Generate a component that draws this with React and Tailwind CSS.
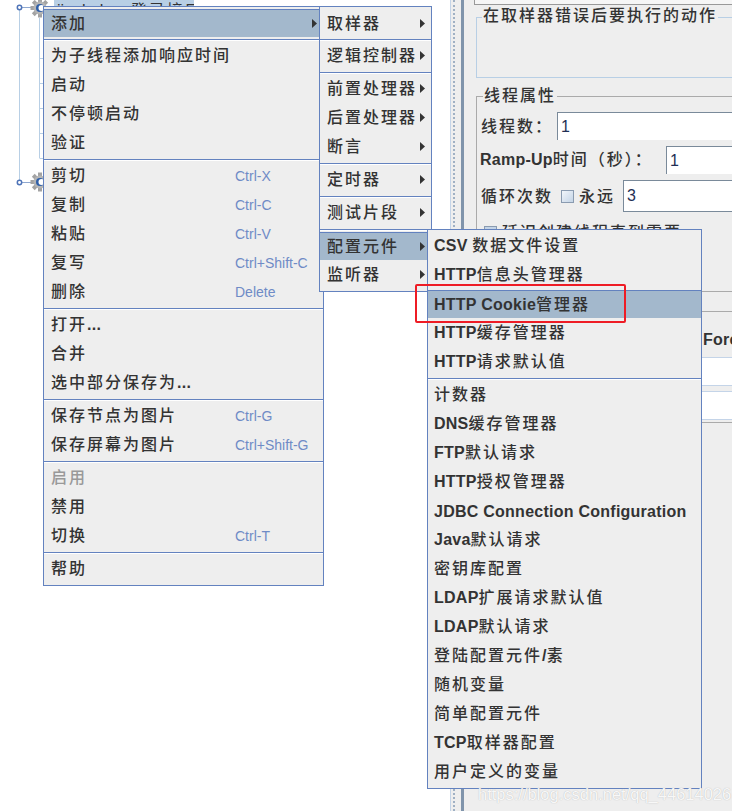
const LINE = 'bg-[#6382bf]';

const mainMenu = [
  { label: '添加', arrow: true, active: true },
  'sep',
  { label: '为子线程添加响应时间' },
  { label: '启动' },
  { label: '不停顿启动' },
  { label: '验证' },
  'sep',
  { label: '剪切', key: 'Ctrl-X' },
  { label: '复制', key: 'Ctrl-C' },
  { label: '粘贴', key: 'Ctrl-V' },
  { label: '复写', key: 'Ctrl+Shift-C' },
  { label: '删除', key: 'Delete' },
  'sep',
  { label: '打开...' },
  { label: '合并' },
  { label: '选中部分保存为...' },
  'sep',
  { label: '保存节点为图片', key: 'Ctrl-G' },
  { label: '保存屏幕为图片', key: 'Ctrl+Shift-G' },
  'sep',
  { label: '启用', disabled: true },
  { label: '禁用' },
  { label: '切换', key: 'Ctrl-T' },
  'sep',
  { label: '帮助' },
];

const addMenu = [
  { label: '取样器', arrow: true },
  'sep',
  { label: '逻辑控制器', arrow: true },
  'sep',
  { label: '前置处理器', arrow: true },
  { label: '后置处理器', arrow: true },
  { label: '断言', arrow: true },
  'sep',
  { label: '定时器', arrow: true },
  'sep',
  { label: '测试片段', arrow: true },
  'sep',
  { label: '配置元件', arrow: true, active: true },
  { label: '监听器', arrow: true },
];

const configMenu = [
  { label: 'CSV 数据文件设置' },
  { label: 'HTTP信息头管理器' },
  { label: 'HTTP Cookie管理器', active: true },
  { label: 'HTTP缓存管理器' },
  { label: 'HTTP请求默认值' },
  'sep',
  { label: '计数器' },
  { label: 'DNS缓存管理器' },
  { label: 'FTP默认请求' },
  { label: 'HTTP授权管理器' },
  { label: 'JDBC Connection Configuration' },
  { label: 'Java默认请求' },
  { label: '密钥库配置' },
  { label: 'LDAP扩展请求默认值' },
  { label: 'LDAP默认请求' },
  { label: '登陆配置元件/素' },
  { label: '随机变量' },
  { label: '简单配置元件' },
  { label: 'TCP取样器配置' },
  { label: '用户定义的变量' },
];

// latin runs are bold arial, cjk runs are spaced out like the old bitmap font
function Label({ text }) {
  const parts = text.split(/([\u0000-\u007f]+)/).filter(Boolean);
  const latinOnly = parts.length === 1 && /^[\u0000-\u007f]+$/.test(parts[0]);
  return (
    <span className={`inline-block whitespace-nowrap ${latinOnly ? 'pt-px' : 'pb-[2px]'}`}>
      {parts.map((part, i) =>
        /^[\u0000-\u007f]+$/.test(part) ? (
          <span key={i} className="font-['Liberation_Sans',sans-serif] font-bold text-[16px] tracking-[0.25px] whitespace-pre">
            {part}
          </span>
        ) : (
          <span key={i} className="font-['Noto_Sans_CJK_SC',sans-serif] font-medium text-[16px] tracking-[2px]">
            {part}
          </span>
        )
      )}
    </span>
  );
}

function Arrow() {
  return (
    <svg width="5" height="9" viewBox="0 0 5 9" className="shrink-0">
      <polygon points="0,0 5,4.5 0,9" fill="#333333" />
    </svg>
  );
}

function Menu({ items, className, pad, keyCol }) {
  return (
    <div className={`absolute bg-[#eeeeee] border border-[#6382bf] pt-[2px] pb-[2px] text-[#333333] ${className}`}>
      {items.map((item, i) => {
        if (item === 'sep') {
          return (
            <div key={i} className="h-[4px] pt-[2px]">
              <div className={`h-px ${LINE}`} />
              <div className="h-px bg-white" />
            </div>
          );
        }
        return (
          <div
            key={i}
            className={`flex items-center ${pad} pr-[6px] ${i === 0 ? 'h-[28px]' : item.active ? 'mt-px h-[28px]' : 'h-[29px]'} ${item.active ? 'bg-[#a3b8cc] border-t border-[#6382bf]' : ''} ${item.disabled ? 'text-[#999999]' : ''}`}
          >
            <div className={keyCol && item.key ? 'w-[184px] shrink-0' : 'flex-1'}>
              <Label text={item.label} />
            </div>
            {item.key && (
              <span className="pt-px font-['Liberation_Sans',sans-serif] text-[14px] text-[#6f8bc6] whitespace-nowrap">{item.key}</span>
            )}
            {item.arrow && <Arrow />}
          </div>
        );
      })}
    </div>
  );
}

function Gear({ cx, cy }) {
  const teeth = [0, 45, 90, 135, 180, 225, 270, 315];
  return (
    <g>
      {teeth.map((a) => (
        <rect key={a} x={cx - 2} y={cy - 9.5} width="4" height="5" fill="#a3a3a3" transform={`rotate(${a} ${cx} ${cy})`} />
      ))}
      <circle cx={cx} cy={cy} r="6.5" fill="#b5b5b5" />
      <circle cx={cx} cy={cy} r="4" fill="#2f5fa8" />
      <circle cx={cx + 1.5} cy={cy} r="3" fill="#ffffff" />
    </g>
  );
}

function TreeLines() {
  return (
    <svg width="60" height="200" viewBox="0 0 60 200" className="block">
      <line x1="19.5" y1="8" x2="19.5" y2="182" stroke="#b8cfe5" />
      <line x1="39.5" y1="18" x2="39.5" y2="158" stroke="#b8cfe5" />
      {[58, 83, 108, 133, 158].map((y) => (
        <line key={y} x1="39.5" y1={y + 0.5} x2="44" y2={y + 0.5} stroke="#b8cfe5" />
      ))}
      <line x1="22" y1="7.5" x2="31" y2="7.5" stroke="#8fa8d0" />
      <line x1="22" y1="182.5" x2="31" y2="182.5" stroke="#8fa8d0" />
      <circle cx="19.5" cy="7.5" r="2.2" fill="#ffffff" stroke="#4f74b8" strokeWidth="1.5" />
      <circle cx="19.5" cy="182.5" r="2.2" fill="#ffffff" stroke="#4f74b8" strokeWidth="1.5" />
      <Gear cx={40} cy={8} />
      <Gear cx={40} cy={182} />
    </svg>
  );
}

function Field({ value, className }) {
  return (
    <input
      readOnly
      value={value}
      className={`bg-white border-t border-l border-[#7a8a9a] pl-[3px] font-['Liberation_Sans',sans-serif] text-[16px] text-[#1f2f55] outline-none ${className}`}
    />
  );
}

export default function App() {
  return (
    <div className="relative flex w-[732px] h-[811px] overflow-hidden bg-white">
      {/* tree */}
      <div className="w-[451px] shrink-0 border-r border-[#c4d4e8] overflow-hidden">
        <div className="h-0">
          <TreeLines />
        </div>
        <div className="ml-[54px] w-[140px] h-[6px] bg-[#b8cfe5] overflow-hidden">
          <div className="-mt-[3px] pl-[3px] text-[#333333] whitespace-nowrap">
            <span className="font-['Liberation_Sans',sans-serif] text-[16px]">jiaobohan </span>
            <span className="font-['Noto_Sans_CJK_SC',sans-serif] text-[16px] tracking-[2px]">登录接口</span>
          </div>
        </div>
      </div>

      {/* splitter */}
      <div className="w-[10px] shrink-0 bg-[#eeeeee] flex justify-center">
        <div className="w-0 ml-[-4px] border-l-2 border-dotted border-[#9fb0c4]" />
      </div>
      <div className="w-[3px] shrink-0 bg-[#8094ab]" />

      {/* right side form */}
      <div className="flex-1 min-w-0 bg-[#eeeeee] overflow-hidden">
        <div className="ml-[10px] w-[400px] h-[5px] border-l border-b border-[#999999] bg-[#f6f6f6]" />
        <fieldset className="mt-[2px] ml-[12px] w-[400px] h-[71px] border border-[#b8cfe5] pl-[5px]">
          <legend className="flex items-center h-[20px] pb-[3px] px-[1px] text-[#333333]">
            <Label text="在取样器错误后要执行的动作" />
          </legend>
        </fieldset>
        <fieldset className="mt-[8px] ml-[12px] w-[400px] h-[206px] border border-[#aaaaaa] pl-[4px] pt-[6px] text-[#333333]">
          <legend className="flex items-center ml-[2px] h-[20px] pb-[1px] px-[1px]">
            <Label text="线程属性" />
          </legend>
          <div className="flex items-center h-[28px]">
            <div className="w-[76px] shrink-0"><Label text="线程数：" /></div>
            <Field value="1" className="w-[300px] h-[28px]" />
          </div>
          <div className="flex items-center h-[28px] mt-[6px] -ml-px">
            <div className="w-[186px] shrink-0"><Label text="Ramp-Up时间（秒）：" /></div>
            <Field value="1" className="w-[200px] h-[28px]" />
          </div>
          <div className="flex items-center h-[32px] mt-[6px]">
            <div className="w-[80px] shrink-0"><Label text="循环次数" /></div>
            <div className="w-[13px] h-[13px] shrink-0 border border-[#8a9bb0] bg-gradient-to-br from-[#f2f6fa] to-[#c4d4e6]" />
            <div className="ml-[5px] w-[44px] shrink-0"><Label text="永远" /></div>
            <Field value="3" className="w-[200px] h-[32px] border-b" />
          </div>
          <div className="flex items-center h-[20px] mt-[10px] ml-[3px]">
            <div className="w-[13px] h-[13px] shrink-0 border border-[#8a9bb0] bg-[#c4d4e6]" />
            <div className="ml-[5px]"><Label text="延迟创建线程直到需要" /></div>
          </div>
        </fieldset>
        <div className="mt-[19px] w-[400px] h-[46px] border-t border-[#aaaaaa] pl-[239px] pt-[15px] text-[#333333]">
          <div className="h-[22px] leading-[22px]"><Label text="Forever" /></div>
        </div>
        <div className="h-[28px] bg-white border-t border-[#c4d4e8]" />
        <div className="h-[6px] border-t border-[#c4d4e8]" />
        <div className="h-[28px] bg-white border-t border-[#c4d4e8]" />
        <div className="h-[3px] border-t border-[#c4d4e8]" />
        <div className="border-t border-[#aaaaaa]" />
      </div>

      {/* popup menus */}
      <Menu items={mainMenu} keyCol pad="pl-[7px]" className="left-[43px] top-[6px] w-[281px] z-10" />
      <Menu items={addMenu} pad="pl-[7px]" className="left-[319px] top-[6px] w-[113px] z-20" />
      <Menu items={configMenu} pad="pl-[6px]" className="left-[427px] top-[229px] w-[275px] z-30" />

      {/* annotation over the screenshot */}
      <div className="absolute left-[415px] top-[284px] w-[211px] h-[39px] border-2 border-[#ee1c25] rounded-[2px] z-40" />
      <div className="absolute left-[478px] top-[782px] z-40 font-['Liberation_Sans',sans-serif] text-[16.5px] text-white/90 [text-shadow:0_0_1px_#aaaaaa] whitespace-nowrap">
        https://blog.csdn.net/qq_44614026
      </div>
    </div>
  );
}
